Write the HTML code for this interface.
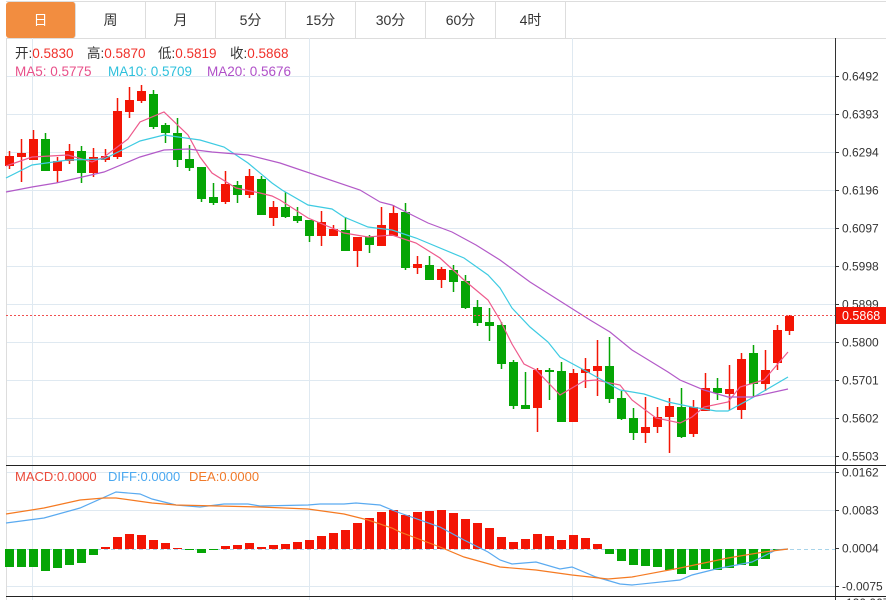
<!DOCTYPE html>
<html><head><meta charset="utf-8"><style>
body{margin:0;width:886px;height:600px;overflow:hidden;background:#fff;font-family:"Liberation Sans","Noto Sans CJK SC",sans-serif;}
#tabs{position:absolute;left:6px;top:1px;height:36px;width:880px;border-top:1px solid #ddd;border-bottom:1px solid #ddd;}
.tab{position:absolute;top:0;height:36px;width:70px;border-right:1px solid #ddd;text-align:center;line-height:36px;font-size:14px;color:#333;box-sizing:border-box;}
.tab.on{background:#f28d40;color:#fff;border-radius:3px;}
svg{position:absolute;left:0;top:0;}
.l{position:absolute;font-size:13.5px;white-space:nowrap;line-height:16px;}
.r{color:#f0302a}
</style></head><body>
<div id="tabs">
<div class="tab on" style="left:0">日</div>
<div class="tab" style="left:70px">周</div>
<div class="tab" style="left:140px">月</div>
<div class="tab" style="left:210px">5分</div>
<div class="tab" style="left:280px">15分</div>
<div class="tab" style="left:350px">30分</div>
<div class="tab" style="left:420px">60分</div>
<div class="tab" style="left:490px">4时</div>
</div>
<svg id="s" width="886" height="600"></svg>
<div class="l" style="left:15px;top:46px;color:#333">开:<span class="r">0.5830</span></div>
<div class="l" style="left:87px;top:46px;color:#333">高:<span class="r">0.5870</span></div>
<div class="l" style="left:158px;top:46px;color:#333">低:<span class="r">0.5819</span></div>
<div class="l" style="left:230px;top:46px;color:#333">收:<span class="r">0.5868</span></div>
<div class="l" style="left:15px;top:64px;color:#e8508a">MA5: 0.5775</div>
<div class="l" style="left:108px;top:64px;color:#2ec0dc">MA10: 0.5709</div>
<div class="l" style="left:207px;top:64px;color:#b050c8">MA20: 0.5676</div>
<div class="l" style="left:15px;top:469px;font-size:13px;color:#ea4a3a">MACD:0.0000</div>
<div class="l" style="left:108px;top:469px;font-size:13px;color:#4aa8f0">DIFF:0.0000</div>
<div class="l" style="left:189px;top:469px;font-size:13px;color:#f07a2a">DEA:0.0000</div>
<script>
var s=document.getElementById('s'),h='';
var G='#dfe9f1';
[76,114,152,190,228,266,304,342,380,418,456,472,510,586].forEach(function(y){h+='<line x1="6" x2="835" y1="'+(y+.5)+'" y2="'+(y+.5)+'" stroke="'+G+'"/>';});
[32,309,572].forEach(function(x){h+='<line x1="'+(x+.5)+'" x2="'+(x+.5)+'" y1="38" y2="600" stroke="'+G+'"/>';});
h+='<line x1="6.5" x2="6.5" y1="38" y2="600" stroke="#ddd"/>';
h+='<line x1="835.5" x2="835.5" y1="38" y2="600" stroke="#333"/>';
h+='<line x1="6" x2="886" y1="465.5" y2="465.5" stroke="#222"/>';
h+='<line x1="6" x2="886" y1="596.5" y2="596.5" stroke="#222"/>';
var L=[[76,'0.6492'],[114,'0.6393'],[152,'0.6294'],[190,'0.6196'],[228,'0.6097'],[266,'0.5998'],[304,'0.5899'],[342,'0.5800'],[380,'0.5701'],[418,'0.5602'],[456,'0.5503'],[472,'0.0162'],[510,'0.0083'],[548,'0.0004'],[586,'-0.0075']];
L.forEach(function(a){h+='<line x1="835" x2="839" y1="'+(a[0]+.5)+'" y2="'+(a[0]+.5)+'" stroke="#333"/><text x="842" y="'+(a[0]+4.5)+'" font-size="12" fill="#333" font-family="Liberation Sans">'+a[1]+'</text>';});
h+='<text x="842" y="607" font-size="12" fill="#333" font-family="Liberation Sans">-120.0675</text>';
var C=[[156,166,151,169,1],[153,157,139,182,1],[139,160,130,160,1],[139,171,133,171,0],[161,171,157,183,1],[151,161,144,164,1],[151,173,146,183,0],[157,173,148,177,1],[156,160,149,162,1],[111,157,98,159,1],[100,112,87,118,1],[91,101,85,103,1],[94,127,90,129,0],[125,133,123,143,0],[133,160,118,167,0],[159,168,145,171,0],[167,199,167,202,0],[197,203,183,205,0],[184,202,171,204,1],[185,195,181,203,0],[176,195,169,198,1],[179,215,176,215,0],[207,218,201,226,1],[207,217,192,218,0],[216,221,207,223,0],[220,236,220,242,0],[222,236,211,246,1],[229,236,225,236,1],[230,251,217,251,0],[237,251,237,267,1],[237,245,235,253,0],[225,246,207,246,1],[213,236,205,236,1],[212,268,203,270,0],[264,268,256,274,1],[265,280,256,280,0],[269,280,267,288,1],[270,282,265,292,0],[281,308,275,309,0],[307,323,300,326,0],[322,326,308,341,0],[325,364,322,369,0],[362,406,360,409,0],[405,409,372,409,0],[370,408,368,432,1],[370,372,368,400,0],[371,422,362,422,0],[373,422,369,422,1],[369,373,358,388,1],[366,371,340,396,1],[366,399,337,403,0],[398,419,391,420,0],[418,433,408,440,0],[427,433,397,443,1],[417,427,407,433,1],[406,417,398,453,1],[407,437,388,438,0],[407,434,400,437,1],[388,411,373,411,1],[388,393,378,400,0],[389,394,365,410,1],[359,410,353,419,1],[353,384,345,396,0],[370,384,350,391,1],[330,363,325,370,1],[316,331,315,335,1]];
var R='#f31505',GR='#05a505';
C.forEach(function(c,i){var x=9+12*i,col=c[4]?R:GR;
h+='<line x1="'+(x+.5)+'" x2="'+(x+.5)+'" y1="'+c[2]+'" y2="'+c[3]+'" stroke="'+col+'" stroke-width="1.5"/>';
h+='<rect x="'+(x-4)+'" y="'+c[0]+'" width="9" height="'+Math.max(2,c[1]-c[0])+'" fill="'+col+'"/>';});
function pl(p,col){h+='<polyline fill="none" stroke="'+col+'" stroke-width="1.2" points="'+p+'"/>';}
pl('6,166 32,157 68,155 92,162 104,157 128,139 140,122 164,112 188,135 200,157 212,173 236,188 260,193 272,196 280,200 308,218 344,233 368,237 392,235 416,243 440,258 464,280 488,300 500,320 512,344 524,364 536,370 560,395 584,381 596,380 620,385 632,400 656,418 680,423 692,417 704,407 728,402 740,387 764,380 788,352','#ee5a8c');
pl('6,178 32,165 68,160 104,159 140,141 164,135 200,140 224,147 248,163 272,183 282,190 308,205 332,209 344,217 368,227 392,230 416,238 464,258 488,275 500,288 512,308 530,327 548,342 560,357 584,370 620,390 644,394 668,402 692,407 716,411 728,411 752,398 788,377','#3ecbe2');
pl('6,192 32,187 56,183 104,172 140,157 164,150 188,149 212,152 248,155 280,163 360,190 380,202 392,205 416,217 428,223 452,232 476,245 500,260 530,282 590,320 610,332 632,350 668,372 680,380 704,390 728,397 752,397 788,389','#b35ac8');
h+='<line x1="6" x2="835" y1="315.5" y2="315.5" stroke="#f05050" stroke-dasharray="2,2"/>';
h+='<rect x="836" y="307" width="50" height="17" fill="#f31505"/><text x="842" y="320" font-size="12.5" fill="#fff" font-family="Liberation Sans">0.5868</text>';
h+='<line x1="6" x2="835" y1="549.5" y2="549.5" stroke="#a8d4ea" stroke-dasharray="4,3"/>';
var M=[-18,-18,-18,-22,-19,-16,-14,-6,2,12,15,14,9,6,1,-1,-4,-1,3,4,6,2,4,5,7,9,13,16,19,26,31,37,39,34,37,38,39,36,30,26,21,12,7,10,15,13,9,14,11,5,-5,-12,-16,-17,-18,-21,-25,-21,-20,-21,-19,-16,-17,-10,-1,0];
M.forEach(function(v,i){var x=9+12*i;if(v>0)h+='<rect x="'+(x-4)+'" y="'+(549-v)+'" width="9" height="'+v+'" fill="'+R+'"/>';else if(v<0)h+='<rect x="'+(x-4)+'" y="549" width="9" height="'+(-v)+'" fill="'+GR+'"/>';});
pl('6,523 44,518 80,508 116,492 140,494 152,499 176,505 200,507 224,504 248,504 260,506 308,505 320,504 344,504 356,503 380,505 392,510 400,513 440,527 464,540 488,552 500,560 512,564 536,562 560,569 572,567 596,577 620,584 632,585 680,580 692,575 716,569 752,562 776,550 788,549','#5aaaf0');
pl('6,514 44,508 80,500 104,498 116,498 152,503 176,505 260,507 308,509 344,514 368,520 392,528 400,532 440,547 464,557 500,567 536,570 572,575 608,579 632,577 680,568 728,558 764,552 788,549','#f57a22');
s.innerHTML=h;
</script>
</body></html>
